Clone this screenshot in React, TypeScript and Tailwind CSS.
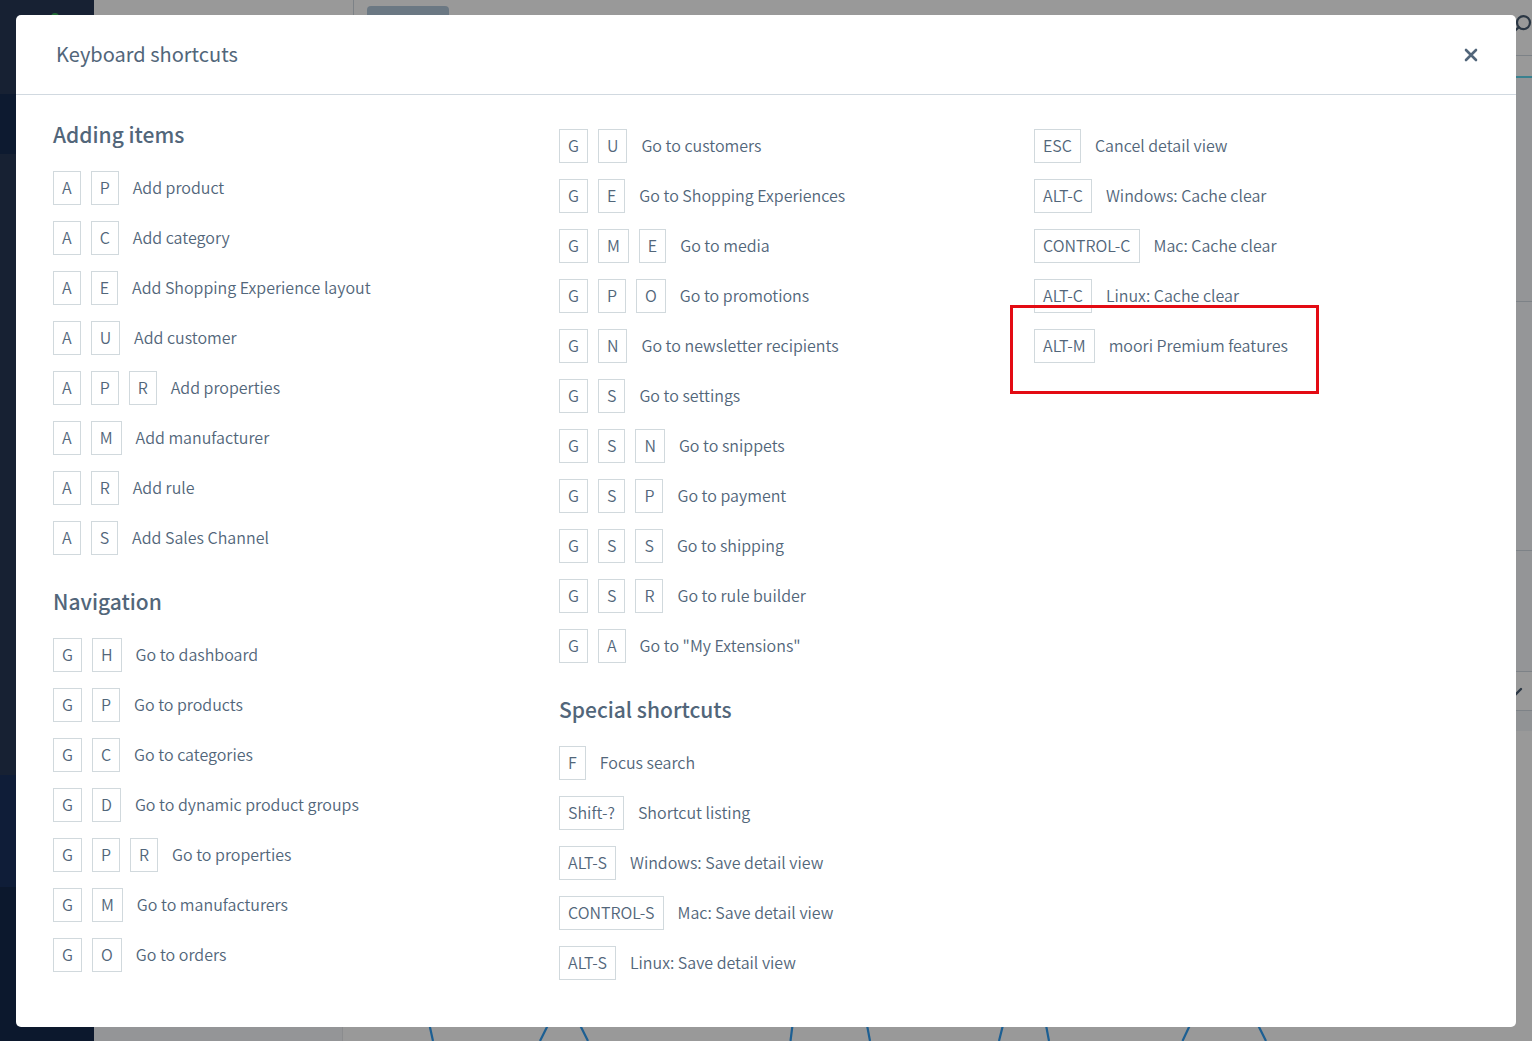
type Shortcut = { keys: string[]; label: string; marked?: boolean };
type Section = { title?: string; items: Shortcut[] };

const s = (keys: string, label: string, marked = false): Shortcut => ({ keys: keys.split(' '), label, marked });

const columns: Section[][] = [
  [
    {
      title: 'Adding items',
      items: [
        s('A P', 'Add product'),
        s('A C', 'Add category'),
        s('A E', 'Add Shopping Experience layout'),
        s('A U', 'Add customer'),
        s('A P R', 'Add properties'),
        s('A M', 'Add manufacturer'),
        s('A R', 'Add rule'),
        s('A S', 'Add Sales Channel'),
      ],
    },
    {
      title: 'Navigation',
      items: [
        s('G H', 'Go to dashboard'),
        s('G P', 'Go to products'),
        s('G C', 'Go to categories'),
        s('G D', 'Go to dynamic product groups'),
        s('G P R', 'Go to properties'),
        s('G M', 'Go to manufacturers'),
        s('G O', 'Go to orders'),
      ],
    },
  ],
  [
    {
      items: [
        s('G U', 'Go to customers'),
        s('G E', 'Go to Shopping Experiences'),
        s('G M E', 'Go to media'),
        s('G P O', 'Go to promotions'),
        s('G N', 'Go to newsletter recipients'),
        s('G S', 'Go to settings'),
        s('G S N', 'Go to snippets'),
        s('G S P', 'Go to payment'),
        s('G S S', 'Go to shipping'),
        s('G S R', 'Go to rule builder'),
        s('G A', 'Go to "My Extensions"'),
      ],
    },
    {
      title: 'Special shortcuts',
      items: [
        s('F', 'Focus search'),
        s('Shift-?', 'Shortcut listing'),
        s('ALT-S', 'Windows: Save detail view'),
        s('CONTROL-S', 'Mac: Save detail view'),
        s('ALT-S', 'Linux: Save detail view'),
      ],
    },
  ],
  [
    {
      items: [
        s('ESC', 'Cancel detail view'),
        s('ALT-C', 'Windows: Cache clear'),
        s('CONTROL-C', 'Mac: Cache clear'),
        s('ALT-C', 'Linux: Cache clear'),
        s('ALT-M', 'moori Premium features', true),
      ],
    },
  ],
];

function ShortcutRow({ item }: { item: Shortcut }) {
  return (
    <li className="relative flex h-[50px] items-center">
      <span className="flex gap-2.5">
        {item.keys.map((key, i) => (
          <kbd
            key={i}
            className="flex h-[34px] items-center border border-[#d1d9dd] px-2 pb-0.5 font-[inherit] text-base leading-6"
          >
            {key}
          </kbd>
        ))}
      </span>
      <span className="ml-3.5 whitespace-nowrap pb-0.5">{item.label}</span>
      {item.marked && (
        <span className="pointer-events-none absolute -left-6 -top-4 h-[89px] w-[309px] border-3 border-[#e30b13]" />
      )}
    </li>
  );
}

function Backdrop() {
  return (
    <div className="flex h-screen overflow-hidden bg-[#999999]" aria-hidden="true">
      <div className="flex w-[94px] flex-none flex-col bg-[#172133]">
        <div className="flex h-[94px] flex-none justify-center pt-[13px] pl-4">
          <span className="h-2 w-2 rounded-full bg-[#226b35]" />
        </div>
        <div className="h-[60px] flex-none bg-[#0d1a30]" />
        <div className="h-[621px] flex-none" />
        <div className="h-28 flex-none bg-[#0f1d38]" />
        <div className="flex-1 bg-[#0c182d]" />
      </div>
      <div className="flex min-w-0 flex-1 flex-col">
        <div className="flex h-14 flex-none border-b border-[#7d8287]">
          <div className="w-[260px] border-r border-[#7d8287]" />
          <div className="ml-[13px] mt-1.5 h-8 w-[82px] rounded-[4px] bg-[#6b7883]" />
          <svg className="ml-auto mt-3 h-5 w-5" viewBox="0 0 20 20" fill="none" stroke="#2b3744" strokeWidth="2.2">
            <circle cx="11.5" cy="10.6" r="6.5" />
            <path d="M6.8 15.2 2 19.600" strokeLinecap="round" />
          </svg>
        </div>
        <div className="h-[22px] flex-none border-b-2 border-[#39818f]" />
        <div className="h-56 flex-none border-b border-[#7d8287] bg-[#949597]" />
        <div className="h-[249px] flex-none border-b border-[#7d8287] bg-[#959698]" />
        <div className="h-[121px] flex-none border-b border-[#7d8287] bg-[#949597]" />
        <div className="flex h-[39px] flex-none justify-end border-b border-[#7d8287]">
          <svg className="mr-2 mt-3.5 h-3 w-4" viewBox="0 0 16 12" fill="none" stroke="#2b3744" strokeWidth="2.4">
            <path d="M2 4 7 9 13 3" strokeLinecap="round" />
          </svg>
        </div>
        <div className="h-5 flex-none bg-[#919395]" />
        <div className="flex min-h-0 flex-1">
          <div className="w-[249px] flex-none border-r border-[#8b8c8e] bg-[#949597]" />
          <div className="flex min-w-0 flex-1 items-end">
            <svg className="h-4 w-[1173px] flex-none" viewBox="343 1025 1173 16" fill="none" stroke="#1c5f93" strokeWidth="2.2">
              <path d="M429.5 1025 433 1041M548 1025 540 1041M580 1025 588 1041M792.500 1025 790.500 1041M867 1025 870 1041M1003 1025 999 1041M1046 1025 1049 1041M1190 1025 1182.500 1041M1258 1025 1266 1041" />
            </svg>
          </div>
        </div>
      </div>
    </div>
  );
}

export default function App() {
  return (
    <div className="relative font-['Noto_Sans_CJK_SC',sans-serif] text-[#52667a]">
      <Backdrop />
      <div className="absolute inset-0 px-4 pt-[15px]">
        <div role="dialog" aria-modal="true" aria-labelledby="shortcuts-title" className="rounded-[5px] bg-white">
          <header className="flex h-20 items-center justify-between border-b border-[#d1d9e0] pl-10 pr-[35px]">
            <h1 id="shortcuts-title" className="pb-0.5 text-xl font-normal leading-8">
              Keyboard shortcuts
            </h1>
            <button type="button" aria-label="Close" className="flex h-5 w-5 items-center justify-center">
              <svg className="h-3.5 w-3.5" viewBox="0 0 14 14" fill="none" stroke="#52667a" strokeWidth="2.6">
                <path d="M2 2 12 12M12 2 2 12" strokeLinecap="round" />
              </svg>
            </button>
          </header>
          <div className="grid grid-cols-[506fr_475fr_445fr] px-[37px] pb-[39px] pt-[25px] text-base font-[350] leading-6">
            {columns.map((sections, c) => (
              <div key={c} className="flex flex-col gap-6">
                {sections.map((section, i) => (
                  <section key={i} className={section.title ? '' : 'pt-px'}>
                    {section.title && (
                      <h2 className="mb-[15px] text-[21px] font-medium leading-7">{section.title}</h2>
                    )}
                    <ul>
                      {section.items.map((item, n) => (
                        <ShortcutRow key={n} item={item} />
                      ))}
                    </ul>
                  </section>
                ))}
              </div>
            ))}
          </div>
        </div>
      </div>
    </div>
  );
}
